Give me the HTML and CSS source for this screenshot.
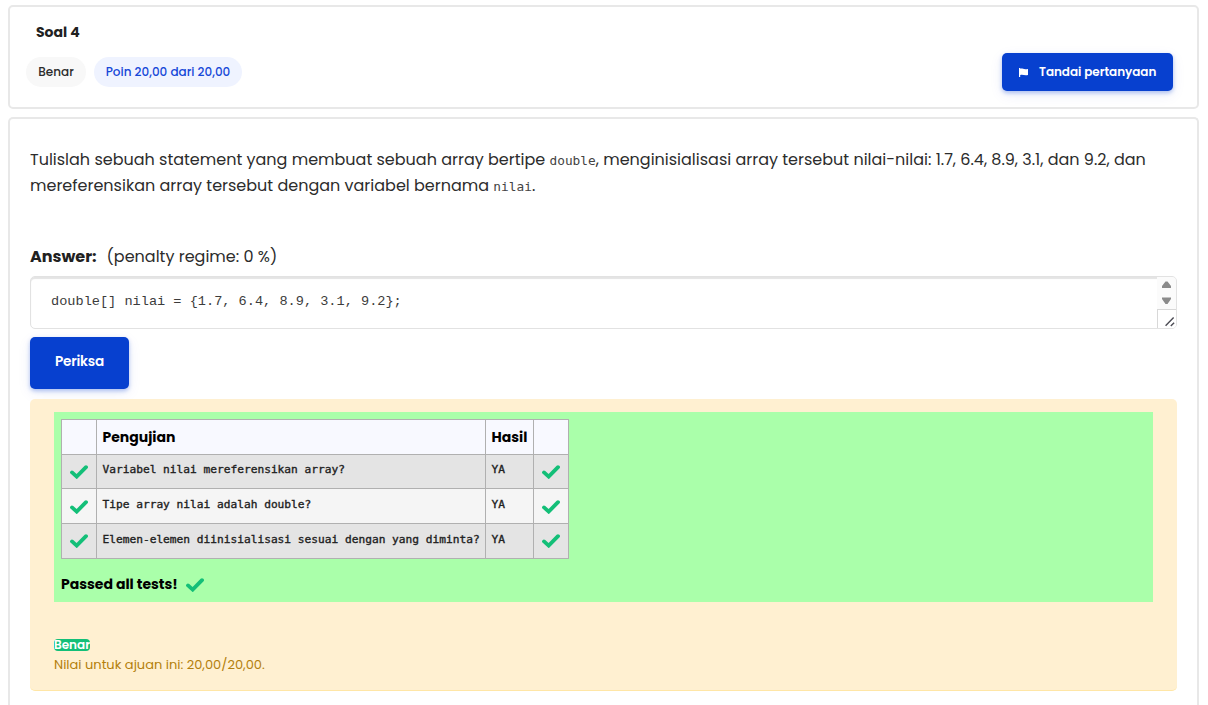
FILE: index.html
```html
<!DOCTYPE html>
<html lang="id">
<head>
<meta charset="utf-8">
<title>Soal 4</title>
<link rel="stylesheet" href="styles.css">
</head>
<body>
<svg class="defs" width="0" height="0" aria-hidden="true">
  <symbol id="check" viewBox="0 0 18 14"><path d="M2 7.4 L6.7 11.6 L16 2.2" fill="none" stroke="#13bf78" stroke-width="3.8" stroke-linecap="round" stroke-linejoin="miter"/></symbol>
</svg>
<section class="card info">
  <h3 class="info-title">Soal 4</h3>
  <div class="info-row">
    <span class="pill pill-state">Benar</span>
    <span class="pill pill-grade">Poin 20,00 dari 20,00</span>
    <button class="btn btn-flag" type="button">
      <svg class="flag" viewBox="0 0 9 9"><path d="M0 0h1.200v.8C3.400 0 4.300 1.800 9 .9v6C5.500 7.900 4 6.100 1.200 7V9H0z" fill="#fff"/></svg>
      <span>Tandai pertanyaan</span>
    </button>
  </div>
</section>
<section class="card question">
  <p class="prompt">Tulislah sebuah statement yang membuat sebuah array bertipe <code>double</code>, menginisialisasi array tersebut nilai-nilai: 1.7, 6.4, 8.9, 3.1, dan 9.2, dan<br>mereferensikan array tersebut dengan variabel bernama <code>nilai</code>.</p>
  <div class="answer-label"><strong>Answer:</strong><span class="penalty">(penalty regime: 0 %)</span></div>
  <div class="answer">
    <div class="answer-text">double[] nilai = {1.7, 6.4, 8.9, 3.1, 9.2};</div>
    <div class="scroll">
      <svg class="arrows" viewBox="0 0 19 32"><path d="M8.500 4.500h2l3.500 4.500v2H5V9zM5 20.500h9v1.500l-3.500 5h-2L5 22z" fill="#8b8b8b"/></svg>
      <svg class="grip" viewBox="0 0 19 19"><path d="M8 16.500 16.500 8M13.500 17l3.500-3.500" stroke="#4d4d55" stroke-width="1.500" fill="none"/></svg>
    </div>
  </div>
  <button class="btn btn-check" type="button">Periksa</button>
  <div class="feedback">
    <div class="result">
      <table class="tests">
        <tr><th class="c-mark"></th><th class="c-test">Pengujian</th><th class="c-out">Hasil</th><th class="c-mark"></th></tr>
        <tr class="odd r1"><td class="mark"><svg class="check"><use href="#check"/></svg></td><td><pre>Variabel nilai mereferensikan array?</pre></td><td><pre>YA</pre></td><td class="mark"><svg class="check"><use href="#check"/></svg></td></tr>
        <tr class="even"><td class="mark"><svg class="check"><use href="#check"/></svg></td><td><pre>Tipe array nilai adalah double?</pre></td><td><pre>YA</pre></td><td class="mark"><svg class="check"><use href="#check"/></svg></td></tr>
        <tr class="odd"><td class="mark"><svg class="check"><use href="#check"/></svg></td><td><pre>Elemen-elemen diinisialisasi sesuai dengan yang diminta?</pre></td><td><pre>YA</pre></td><td class="mark"><svg class="check"><use href="#check"/></svg></td></tr>
      </table>
      <p class="passed">Passed all tests!<svg class="check"><use href="#check"/></svg></p>
    </div>
    <div class="badge">Benar</div>
    <div class="grade">Nilai untuk ajuan ini: 20,00/20,00.</div>
  </div>
</section>
</body>
</html>
```
FILE: styles.css
```css
* { box-sizing: border-box; }
html { overflow: hidden; }
body { margin: 0; padding: 5px 9px 0 8px; background: #fff; color: #2c2c2c; font-family: Poppins, Inter, sans-serif; font-size: 16px; }
.defs { position: absolute; }
.card { border: 2px solid #e8e8e8; border-radius: 5px; background: #fff; }
.info { height: 104px; margin-bottom: 8px; padding: 15px 24px 0 17px; }
.info-title { margin: 0 0 11px 9px; font-size: 14px; line-height: 20px; font-weight: 700; color: #212121; }
.info-row { display: flex; align-items: center; height: 38px; }
.pill { height: 30px; border-radius: 15px; display: flex; align-items: center; justify-content: center; font-size: 12px; font-weight: 500; white-space: nowrap; }
.pill-state { width: 60px; margin-right: 7px; margin-left: -1px; background: #f8f8f8; }
.pill-grade { width: 148px; margin-left: 1px; background: #eff3ff; color: #1648d8; }
.btn { border: 0; border-radius: 5px; background: #0740cf; color: #fff; font-family: inherit; font-weight: 600; display: flex; align-items: center; white-space: nowrap; box-shadow: 0 2px 4px rgba(7,64,207,.3), 0 4px 14px rgba(7,64,207,.08); }
.btn-flag { width: 171px; height: 38px; margin-left: auto; padding: 0 0 0 17px; gap: 11px; font-size: 12px; letter-spacing: -.04px; }
.flag { width: 9px; height: 9px; }
.question { height: 588px; padding: 28px 20px 0 20px; border-bottom: 0; border-radius: 5px 5px 0 0; }
.prompt { margin: 0 0 46px; line-height: 26px; white-space: nowrap; }
.prompt code { font-family: "DejaVu Sans Mono", monospace; font-size: 12.8px; line-height: 1; color: #444; }
.answer-label { line-height: 24px; margin-bottom: 7px; white-space: nowrap; }
.answer-label strong { color: #212121; }
.penalty { margin-left: 10px; }
.answer { display: flex; justify-content: space-between; height: 53px; border: 1px solid #e2e2e2; border-radius: 5px; box-shadow: inset 0 2px 1px #e4e4e4; overflow: hidden; }
.answer-text { padding: 15px 0 0 20px; font-family: "Liberation Mono", monospace; font-size: 13.6px; line-height: 20px; color: #3c3c3c; white-space: pre; }
.scroll { width: 19px; background: #fbfbfb; }
.arrows { display: block; width: 19px; height: 32px; }
.grip { display: block; width: 19px; height: 19px; border: solid #d8d8d8; border-width: 1px 0 0 1px; background: #fff; }
.btn-check { width: 99px; height: 52px; margin: 8px 0 10px; padding: 0 0 3px 25px; font-size: 13.6px; letter-spacing: -.2px; }
.feedback { height: 292px; padding: 13px 24px 0; border-bottom: 1px solid #ffe6a6; border-radius: 5px; background: #fff0d1; color: #b37f0c; }
.result { height: 190px; padding: 7px; background: #aaffaa; color: #000; }
.tests { border-collapse: collapse; table-layout: fixed; width: 508px; height: 140px; }
.tests th, .tests td { border: 1px solid #b0b0b0; padding: 0 0 0 5.5px; text-align: left; }
.tests th { height: 35px; background: #f8f9ff; font-size: 14px; font-weight: 700; }
.tests .c-mark { width: 35px; }
.tests .c-out { width: 48px; }
.odd { background: #e4e4e4; height: 35px; }
.r1 { height: 34px; }
.even { background: #f5f5f5; height: 35px; }
.tests .mark { padding: 0 0 0 8px; }
.tests .even .mark { padding-top: 1px; }
.tests pre { margin: 0 0 2px; font-family: "DejaVu Sans Mono", monospace; font-size: 11.2px; font-weight: 400; line-height: 16px; -webkit-text-stroke: .35px #212121; color: #212121; white-space: pre; }
.tests .r1 pre { margin-bottom: 4px; }
.check { display: block; width: 18px; height: 14px; }
.passed { display: flex; align-items: center; gap: 8px; margin: 15px 0 0; font-size: 14px; font-weight: 700; line-height: 21px; }
.badge { display: flex; align-items: center; justify-content: center; width: 36px; height: 12px; margin-top: 37px; border-radius: 4px; background: #13bf78; color: #fff; font-size: 12px; font-weight: 600; line-height: 12px; }
.grade { margin-top: 4px; font-size: 13px; line-height: 20px; white-space: nowrap; }
```
